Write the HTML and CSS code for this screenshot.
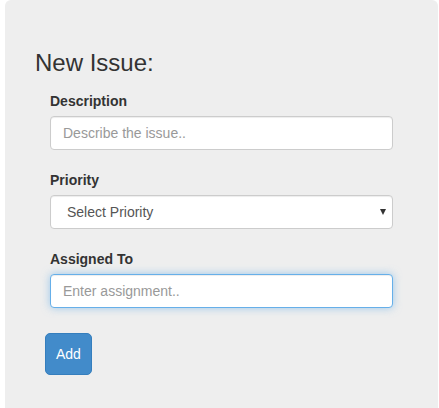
FILE: index.html
```html
<!DOCTYPE html>
<html lang="en">
<head>
<meta charset="utf-8">
<title>New Issue</title>
<link rel="stylesheet" href="styles.css">
</head>
<body>
<div class="page">
  <div class="jumbotron">
    <h3 class="title">New Issue:</h3>
    <form class="issue-form">
      <div class="form-group">
        <label class="label" for="desc">Description</label>
        <input class="control" id="desc" type="text" placeholder="Describe the issue..">
      </div>
      <div class="form-group">
        <label class="label" for="prio">Priority</label>
        <div class="select-wrap">
          <select class="control select" id="prio">
            <option>Select Priority</option>
            <option>Low</option>
            <option>Medium</option>
            <option>High</option>
          </select>
        </div>
      </div>
      <div class="form-group">
        <label class="label" for="assign">Assigned To</label>
        <input class="control focused" id="assign" type="text" placeholder="Enter assignment.." autofocus>
      </div>
      <button type="button" class="btn-add">Add</button>
    </form>
  </div>
</div>
</body>
</html>
```

FILE: styles.css
```css
* { box-sizing: border-box; }

html, body {
  margin: 0;
  padding: 0;
  background: #fff;
  font-family: "Liberation Sans", Arial, Helvetica, sans-serif;
  font-size: 14px;
  line-height: 20px;
  color: #333;
}

.page {
  padding: 0 1px 0 5px;
}

.jumbotron {
  background: #eeeeee;
  border-radius: 6px 6px 0 0;
  padding: 50px 30px 34px 30px;
}

.title {
  margin: 0 0 15px 0;
  font-size: 24px;
  font-weight: 400;
  line-height: 26px;
  color: #333;
}

.issue-form {
  display: flex;
  flex-direction: column;
  align-items: flex-start;
}

.form-group {
  align-self: stretch;
  margin: 0 15px 20px 15px;
  display: flex;
  flex-direction: column;
}

.label {
  font-weight: 700;
  font-size: 14px;
  line-height: 20px;
  margin-bottom: 5px;
  color: #333;
}

.control {
  display: block;
  width: 100%;
  height: 34px;
  padding: 6px 12px;
  font-family: "Liberation Sans", Arial, Helvetica, sans-serif;
  font-size: 14px;
  line-height: 20px;
  color: #555;
  background: #fff;
  border: 1px solid #ccc;
  border-radius: 4px;
  box-shadow: inset 0 1px 1px rgba(0, 0, 0, 0.075);
  outline: none;
  caret-color: #333;
}

.control::placeholder {
  color: #999;
  opacity: 1;
}

.control.focused,
.control:focus {
  border-color: #66afe9;
  box-shadow: inset 0 1px 1px rgba(0, 0, 0, 0.075), 0 0 8px rgba(102, 175, 233, 0.6);
}

.select-wrap {
  position: relative;
}

.select {
  -webkit-appearance: none;
  appearance: none;
  padding-left: 16px;
}

.select-wrap::after {
  content: "";
  position: absolute;
  right: 7px;
  top: 14px;
  width: 0;
  height: 0;
  border-left: 3.5px solid transparent;
  border-right: 3.5px solid transparent;
  border-top: 6px solid #333;
  pointer-events: none;
}

.btn-add {
  margin: 5px 0 0 10px;
  padding: 10px 10px;
  font-family: "Liberation Sans", Arial, Helvetica, sans-serif;
  font-size: 14px;
  line-height: 20px;
  color: #fff;
  background: #428bca;
  border: 1px solid #357ebd;
  border-radius: 5px;
  cursor: pointer;
}
```
